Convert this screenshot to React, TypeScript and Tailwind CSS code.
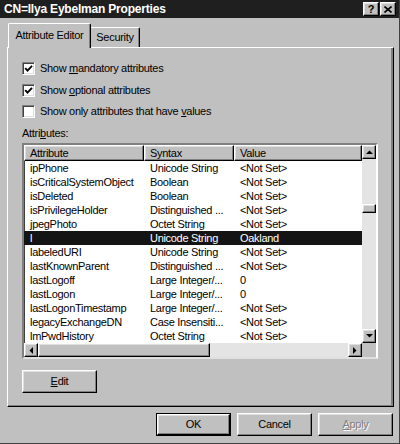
import React from "react";

const raised =
  "border border-t-white border-l-white border-r-black border-b-black shadow-[inset_-1px_-1px_0_#808080,inset_1px_1px_0_#dfdfdf]";

const rows = [
  ["ipPhone", "Unicode String", "<Not Set>"],
  ["isCriticalSystemObject", "Boolean", "<Not Set>"],
  ["isDeleted", "Boolean", "<Not Set>"],
  ["isPrivilegeHolder", "Distinguished ...", "<Not Set>"],
  ["jpegPhoto", "Octet String", "<Not Set>"],
  ["l", "Unicode String", "Oakland"],
  ["labeledURI", "Unicode String", "<Not Set>"],
  ["lastKnownParent", "Distinguished ...", "<Not Set>"],
  ["lastLogoff", "Large Integer/...", "0"],
  ["lastLogon", "Large Integer/...", "0"],
  ["lastLogonTimestamp", "Large Integer/...", "<Not Set>"],
  ["legacyExchangeDN", "Case Insensiti...", "<Not Set>"],
  ["lmPwdHistory", "Octet String", "<Not Set>"],
];

const Arrow: React.FC<{ dir: "up" | "down" | "left" | "right" }> = ({ dir }) => {
  const pts = {
    up: "0,4 7,4 3.5,0.5",
    down: "0,0 7,0 3.5,3.5",
    left: "4,0 4,7 0.5,3.5",
    right: "0,0 0,7 3.5,3.5",
  }[dir];
  const vertical = dir === "up" || dir === "down";
  return (
    <svg width={vertical ? 7 : 4} height={vertical ? 4 : 7} viewBox={vertical ? "0 0 7 4" : "0 0 4 7"}>
      <polygon points={pts} fill="#000" />
    </svg>
  );
};

const ScrollBtn: React.FC<{ dir: "up" | "down" | "left" | "right" }> = ({ dir }) => (
  <div className={`w-[14px] h-[14px] shrink-0 bg-[#c0c0c0] flex items-center justify-center ${raised}`}>
    <Arrow dir={dir} />
  </div>
);

const Check: React.FC<{ checked: boolean; children: React.ReactNode }> = ({ checked, children }) => (
  <div className="flex items-center h-[13px]">
    <div className="w-[13px] h-[13px] bg-white border border-t-[#808080] border-l-[#808080] border-r-white border-b-white shadow-[inset_1px_1px_0_#404040,inset_-1px_-1px_0_#dfdfdf] flex items-center justify-center">
      {checked && (
        <svg width="9" height="9" viewBox="0 0 9 9">
          <path d="M1.2 4.2 L3.5 6.6 L8 1.8" stroke="#000" strokeWidth="1.9" fill="none" />
        </svg>
      )}
    </div>
    <span className="ml-[5px]">{children}</span>
  </div>
);

const Button: React.FC<{ children: React.ReactNode; def?: boolean; disabled?: boolean }> = ({ children, def, disabled }) => (
  <div className={`w-[75px] h-[23px] ${def ? "border border-black" : ""}`}>
    <div
      className={`w-full h-full bg-[#c0c0c0] flex items-center justify-center ${raised} ${
        disabled ? "text-[#808080] [text-shadow:1px_1px_0_#fff]" : ""
      }`}
    >
      {children}
    </div>
  </div>
);

export default function App() {
  return (
    <div className="w-[400px] h-[444px] bg-[#c0c0c0] flex flex-col overflow-hidden border-r border-b border-r-[#404040] border-b-[#404040] font-['Liberation_Sans',Arial,sans-serif] text-[11px] tracking-[-0.3px] text-black">
      {/* Title bar */}
      <div className="h-[18px] bg-[#1f1f1f] flex items-center justify-between pl-[4px] pr-[3px] shrink-0">
        <span className="text-white font-bold text-[12px] tracking-[-0.2px]">CN=Ilya Eybelman Properties</span>
        <div className="flex gap-[1px]">
          <div className={`w-[16px] h-[14px] bg-[#c0c0c0] flex items-center justify-center font-bold text-[11px] leading-none ${raised}`}>
            ?
          </div>
          <div className={`w-[16px] h-[14px] bg-[#c0c0c0] flex items-center justify-center ${raised}`}>
            <svg width="8" height="7" viewBox="0 0 8 7">
              <path d="M0.5 0.5 L7.5 6.5 M7.5 0.5 L0.5 6.5" stroke="#000" strokeWidth="1.6" />
            </svg>
          </div>
        </div>
      </div>

      {/* Tabs */}
      <div className="flex items-end ml-[8px] mt-[5px] h-[24px]">
        <div className="relative z-10 h-[25px] -mb-px w-[83px] bg-[#c0c0c0] border-t border-l border-r border-t-white border-l-white border-r-black rounded-tl-[2px] rounded-tr-[2px] shadow-[inset_-1px_0_0_#808080] flex items-center justify-center pb-[2px]">
          Attribute Editor
        </div>
        <div className="h-[20px] w-[49px] bg-[#c0c0c0] border-t border-r border-t-white border-r-black rounded-tr-[2px] shadow-[inset_-1px_0_0_#808080] flex items-center justify-center">
          Security
        </div>
      </div>

      {/* Panel */}
      <div className="ml-[7px] w-[387px] h-[360px] border border-t-white border-l-white border-r-black border-b-black shadow-[inset_-2px_-1px_0_#808080]">
        <div className="pl-[14px] pt-[14px] flex flex-col">
          <div className="flex flex-col gap-[8.5px]">
            <Check checked>
              Show <u className="underline-offset-[1px]">m</u>andatory attributes
            </Check>
            <Check checked>
              Show <u className="underline-offset-[1px]">o</u>ptional attributes
            </Check>
            <Check checked={false}>
              Show only attributes that have <u className="underline-offset-[1px]">v</u>alues
            </Check>
          </div>
          <div className="mt-[9px] h-[13px] leading-[13px]">
            Attri<u className="underline-offset-[1px]">b</u>utes:
          </div>

          {/* List box */}
          <div className="mt-[3px] w-[356px] border-2 border-t-[#808080] border-l-[#808080] border-r-white border-b-[#dfdfdf] shadow-[inset_1px_1px_0_#404040] bg-white flex flex-col">
            <div className="flex">
              <div className="w-[338px] flex flex-col">
                {/* Header */}
                <div className="flex h-[16px] bg-[#c0c0c0]">
                  {[
                    ["Attribute", "w-[120px]"],
                    ["Syntax", "w-[90px]"],
                    ["Value", "w-[128px]"],
                  ].map(([t, w]) => (
                    <div key={t} className={`${w} h-full flex items-center pl-[5px] ${raised}`}>
                      {t}
                    </div>
                  ))}
                </div>
                {/* Rows */}
                {rows.map(([a, s, v]) => {
                  const sel = a === "l";
                  return (
                    <div key={a} className={`flex h-[14px] items-center ${sel ? "bg-[#141414] text-white" : ""}`}>
                      <div className="w-[120px] pl-[6px] whitespace-nowrap">{a}</div>
                      <div className="w-[90px] pl-[6px] whitespace-nowrap">{s}</div>
                      <div className="w-[128px] pl-[6px] whitespace-nowrap">{v}</div>
                    </div>
                  );
                })}
              </div>
              {/* Vertical scrollbar */}
              <div className="w-[14px] flex flex-col bg-[#e4e4e4]">
                <ScrollBtn dir="up" />
                <div className="h-[45px]" />
                <div className={`h-[9px] bg-[#c0c0c0] ${raised}`} />
                <div className="flex-1" />
                <ScrollBtn dir="down" />
              </div>
            </div>
            {/* Horizontal scrollbar */}
            <div className="flex h-[14px]">
              <div className="w-[338px] flex bg-[#e4e4e4]">
                <ScrollBtn dir="left" />
                <div className={`w-[172px] h-[14px] bg-[#c0c0c0] ${raised}`} />
                <div className="flex-1" />
                <ScrollBtn dir="right" />
              </div>
              <div className="w-[14px] bg-[#c0c0c0]" />
            </div>
          </div>

          <div className="mt-[11px]">
            <Button>
              <span>
                <u className="underline-offset-[1px]">E</u>dit
              </span>
            </Button>
          </div>
        </div>
      </div>

      {/* Dialog buttons */}
      <div className="flex justify-end gap-[6px] pr-[6px] mt-[6px]">
        <Button def>OK</Button>
        <Button>Cancel</Button>
        <Button disabled>
          <span>
            <u className="underline-offset-[1px]">A</u>pply
          </span>
        </Button>
      </div>
    </div>
  );
}
